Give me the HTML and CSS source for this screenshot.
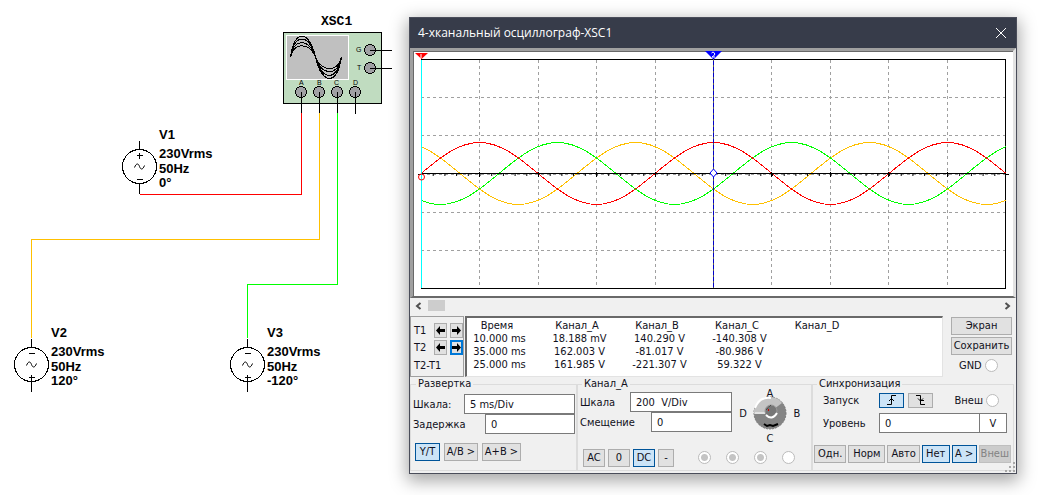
FILE: index.html
```html
<!DOCTYPE html>
<html lang="ru">
<head>
<meta charset="utf-8">
<title>4-хканальный осциллограф-XSC1</title>
<link rel="stylesheet" href="styles.css">
</head>
<body>
<main class="workspace">
  <svg class="schematic" viewBox="0 0 400 495" role="img" aria-label="Схема">
    <defs>
      <g id="source">
        <circle r="17" />
        <path d="M0-26V-17M0 17V27" />
        <path class="tilde" d="M-5 1C-3-4-1-3 0 0S3 4 5-1" />
      </g>
    </defs>
    <g class="wire">
      <path class="wire-red" d="M139.500 194.500H301.500V112" />
      <path class="wire-orange" d="M31.500 338V239.500H319.500V112" />
      <path class="wire-green" d="M247.500 338V284.500H337.500V112" />
    </g>
    <g class="device">
      <rect class="device-case" x="283.500" y="32.500" width="98" height="71" />
      <rect class="device-screen" x="286.500" y="35.500" width="62" height="44" />
      <path class="device-trace" d="M290.500 57C294 29 309 29 315.500 57S337 86 341.500 57M290.500 57C294 33 309 33 315.500 57S337 82 341.500 57M290.500 57C294 38 309 38 315.500 57S337 77 341.500 57M290.500 57C294 42 309 42 315.500 57S337 73 341.500 57" />
      <g class="pin">
        <circle cx="370" cy="50" r="5.500" /><circle cx="370" cy="68" r="5.500" />
        <circle cx="301" cy="92" r="5.500" /><circle cx="319" cy="92" r="5.500" />
        <circle cx="337" cy="92" r="5.500" /><circle cx="355" cy="92" r="5.500" />
      </g>
      <path class="lead" d="M370 50.500H392M370 68.500H392M301.500 92V113M319.500 92V113M337.500 92V113M355.500 92V114" />
      <g class="pin-name">
        <text x="356" y="52">G</text><text x="357" y="70">T</text>
        <text x="299" y="85">A</text><text x="317" y="85">B</text><text x="334" y="85">C</text><text x="353" y="85">D</text>
      </g>
      <text class="device-name" x="321" y="25">XSC1</text>
    </g>
    <g class="source" transform="translate(139.500 166.500)">
      <use href="#source" /><path d="M-3-11H3M0-14V-8M-3 13H3" />
    </g>
    <g class="source" transform="translate(31.500 364.500)">
      <use href="#source" /><path d="M-3-11H3M-3 13H3M0 10V16" />
    </g>
    <g class="source" transform="translate(247.500 364.500)">
      <use href="#source" /><path d="M-3-11H3M-3 13H3M0 10V16" />
    </g>
    <g class="source-text">
      <text x="159" y="139">V1</text><text x="159" y="158">230Vrms</text><text x="159" y="173">50Hz</text><text x="159" y="187">0°</text>
      <text x="51" y="337">V2</text><text x="51" y="356">230Vrms</text><text x="51" y="371">50Hz</text><text x="51" y="385">120°</text>
      <text x="267" y="337">V3</text><text x="267" y="356">230Vrms</text><text x="267" y="371">50Hz</text><text x="267" y="385">-120°</text>
    </g>
  </svg>

  <section class="window">
    <header class="titlebar">
      <h1 class="title">4-хканальный осциллограф-XSC1</h1>
      <button class="close" aria-label="Закрыть"><svg width="12" height="12" viewBox="0 0 12 12"><path d="M1 1L11 11M11 1L1 11" /></svg></button>
    </header>

    <div class="plot">
      <svg class="plot-svg" viewBox="413 51 600 245" role="img" aria-label="Осциллограмма">
        <defs>
          <clipPath id="area"><rect x="421" y="59" width="585" height="230" /></clipPath>
          <path id="wave" d="M0 173.500c19.100-16 37.300-31 58.500-31s39.400 15 58.500 31s37.300 31 58.500 31s39.400-15 58.500-31s37.300-31 58.500-31s39.400 15 58.500 31s37.300 31 58.500 31s39.400-15 58.500-31s37.300-31 58.500-31s39.400 15 58.500 31s37.300 31 58.500 31s39.400-15 58.500-31s37.300-31 58.500-31s39.400 15 58.500 31s37.300 31 58.500 31s39.400-15 58.500-31" />
          <pattern id="minor" x="421" y="173" width="11.700" height="4" patternUnits="userSpaceOnUse"><path d="M.500 0V3" /></pattern>
        </defs>
        <path class="grid" d="M479.500 60V288M538.500 60V288M596.500 60V288M655.500 60V288M771.500 60V288M830.500 60V288M888.500 60V288M947.500 60V288M421 97.500H1005M421 135.500H1005M421 174.500H1005M421 212.500H1005M421 250.500H1005" />
        <path class="frame" d="M421 59.500H1005.500V288.500H421" />
        <g class="waves" clip-path="url(#area)">
          <use class="wave-orange" href="#wave" x="343" />
          <use class="wave-green" href="#wave" x="265" />
          <use class="wave-red" href="#wave" x="421" />
        </g>
        <rect x="421" y="173" width="585" height="3" fill="url(#minor)" />
        <path class="frame" d="M418 174.500H421M421 173.500H1006M1005 174.500H1009M479.500 172V177M538.500 172V177M596.500 172V177M655.500 172V177M771.500 172V177M830.500 172V177M888.500 172V177M947.500 172V177" />
        <path class="cursor-cyan" d="M421.500 60V288" />
        <path class="cursor-one" d="M415 53H428L421.500 59Z" />
        <path class="cursor-mark" d="M421 54V58" />
        <circle class="ring" cx="421.500" cy="177" r="3" />
        <path class="cursor-line" d="M713.500 59V288" />
        <path class="cursor-dash" d="M713.500 59V288" />
        <path class="cursor-two" d="M705 51H722L713.500 59.500Z" />
        <path class="cursor-mark" d="M711.500 53Q713 51 714.500 53T712 57H715" />
        <path class="diamond" d="M713.500 169L717 173L713.500 177L710 173Z" />
      </svg>
    </div>

    <div class="scroll">
      <button class="scroll-arrow" aria-label="Влево"><svg width="7" height="8" viewBox="0 0 7 8"><path d="M5.500 1L2 4L5.500 7" /></svg></button>
      <div class="scroll-thumb"></div>
      <button class="scroll-arrow scroll-end" aria-label="Вправо"><svg width="7" height="8" viewBox="0 0 7 8"><path d="M1.500 1L5 4L1.500 7" /></svg></button>
    </div>

    <div class="readout">
      <div class="cursors">
        <span>T1</span>
        <button class="step" aria-label="T1 влево"><svg width="9" height="9" viewBox="0 0 9 9"><path d="M0 4.500L4 0V3H9V6H4V9Z" /></svg></button>
        <button class="step" aria-label="T1 вправо"><svg width="9" height="9" viewBox="0 0 9 9"><path d="M9 4.500L5 0V3H0V6H5V9Z" /></svg></button>
        <span>T2</span>
        <button class="step" aria-label="T2 влево"><svg width="9" height="9" viewBox="0 0 9 9"><path d="M0 4.500L4 0V3H9V6H4V9Z" /></svg></button>
        <button class="step step-focus" aria-label="T2 вправо"><svg width="9" height="9" viewBox="0 0 9 9"><path d="M9 4.500L5 0V3H0V6H5V9Z" /></svg></button>
        <span class="delta">T2-T1</span>
      </div>
      <div class="values">
        <table class="table">
          <thead><tr><th>Время</th><th>Канал_A</th><th>Канал_B</th><th>Канал_C</th><th>Канал_D</th></tr></thead>
          <tbody>
            <tr><td>10.000 ms</td><td>18.188 mV</td><td>140.290 V</td><td>-140.308 V</td><td></td></tr>
            <tr><td>35.000 ms</td><td>162.003 V</td><td>-81.017 V</td><td>-80.986 V</td><td></td></tr>
            <tr><td>25.000 ms</td><td>161.985 V</td><td>-221.307 V</td><td>59.322 V</td><td></td></tr>
          </tbody>
        </table>
      </div>
      <div class="actions">
        <button class="btn">Экран</button>
        <button class="btn">Сохранить</button>
        <label class="radio-label">GND <input class="radio" type="radio" name="gnd"></label>
      </div>
    </div>

    <div class="settings">
      <fieldset class="group sweep">
        <legend>Развертка</legend>
        <div class="row"><label for="scale">Шкала:</label><input class="field field-wide" id="scale" value="5 ms/Div"></div>
        <div class="row"><label for="delay">Задержка</label><input class="field field-narrow" id="delay" value="0"></div>
        <div class="buttons sweep-buttons"><button class="btn on">Y/T</button><button class="btn">A/B &gt;</button><button class="btn">A+B &gt;</button></div>
      </fieldset>

      <fieldset class="group channel">
        <legend>Канал_A</legend>
        <div class="channel-top">
          <div class="channel-fields">
            <div class="row"><label for="cscale">Шкала</label><input class="field" id="cscale" value="200  V/Div"></div>
            <div class="row"><label for="offset">Смещение</label><input class="field field-offset" id="offset" value="0"></div>
          </div>
          <div class="dial">
            <span class="dial-a">A</span><span class="dial-d">D</span>
            <svg class="knob" width="34" height="34" viewBox="0 0 34 34">
              <circle cx="17" cy="17" r="16" fill="#848484" stroke="#777" stroke-dasharray="2 1" />
              <path d="M1 18C0 8 8 1 17 1C23 1 27 4 29 7L21 13C17 9 13 13 12 18Z" fill="#c4c4c4" />
              <path d="M2 12C5 4 11 1 18 2" fill="none" stroke="#fff" stroke-width="2" />
              <path d="M2 17H12" stroke="#fff" />
              <circle cx="18" cy="15" r="6" fill="#777" stroke="#999" />
              <path d="M13 19Q19 25 24 17" fill="none" stroke="#fff" stroke-width="2" />
              <path d="M11 28L14 30L17 29L20 30L25 28" fill="none" stroke="#000" stroke-width="2" />
              <path d="M13 14L18 9" stroke="#333" stroke-dasharray="1 1" /><rect x="15" y="13" width="1" height="2" fill="#c00" />
            </svg>
            <span class="dial-b">B</span><span class="dial-c">C</span>
          </div>
        </div>
        <div class="buttons channel-buttons">
          <button class="btn">AC</button><button class="btn">0</button><button class="btn on">DC</button><button class="btn">-</button>
          <div class="radios">
            <input class="radio dot" type="radio" name="a" aria-label="A" disabled><input class="radio dot" type="radio" name="b" aria-label="B" disabled><input class="radio dot" type="radio" name="c" aria-label="C" disabled><input class="radio" type="radio" name="d" aria-label="D">
          </div>
        </div>
      </fieldset>

      <fieldset class="group sync">
        <legend>Синхронизация</legend>
        <div class="sync-row">
          <span class="sync-label">Запуск</span>
          <button class="btn edge on" aria-label="Фронт"><svg width="12" height="10" viewBox="0 0 12 10"><path d="M1 9.500H5.500V.500H10M3 6L5.500 3.500L8 6" /></svg></button>
          <button class="btn edge" aria-label="Спад"><svg width="12" height="10" viewBox="0 0 12 10"><path d="M1 .500H5.500V9.500H10M3 3.500L5.500 6L8 3.500M5 5.500H9" /></svg></button>
          <label class="radio-label ext">Внеш <input class="radio" type="radio" name="ext"></label>
        </div>
        <div class="sync-row level">
          <label class="sync-label" for="level">Уровень</label><input class="field level-field" id="level" value="0"><input class="field unit" aria-label="Единица" value="V">
        </div>
        <div class="buttons sync-buttons"><button class="btn">Одн.</button><button class="btn">Норм</button><button class="btn">Авто</button><button class="btn on">Нет</button><button class="btn on">A &gt;</button><button class="btn" disabled>Внеш</button></div>
      </fieldset>
      <svg class="grip" width="10" height="10" viewBox="0 0 10 10"><path d="M8 0H10V2H8ZM4 4H6V6H4ZM8 4H10V6H8ZM0 8H2V10H0ZM4 8H6V10H4ZM8 8H10V10H8Z" /></svg>
    </div>
  </section>
</main>
</body>
</html>
```
FILE: styles.css
```css
* { box-sizing: border-box; }
body { margin: 0; background: #fff; color: #101020; font: 11px/13px "DejaVu Sans Condensed", "DejaVu Sans", sans-serif; overflow-x: hidden; }
button, input { font: inherit; color: inherit; margin: 0; border-radius: 0; }
svg { display: block; }

.workspace { display: flex; align-items: flex-start; gap: 9px; padding-right: 23px; }
.schematic { flex: none; width: 400px; }
.schematic path, .schematic circle, .schematic rect { shape-rendering: crispEdges; }
.wire path { fill: none; }
.wire-red { stroke: #f00; }
.wire-orange { stroke: #ffc000; }
.wire-green { stroke: #0f0; }
.device-case { fill: #c0dcc0; stroke: #000; }
.device-screen { fill: #c0c0c0; stroke: #fff; }
.schematic .device-trace { fill: none; stroke: #000; }
.schematic .tilde { shape-rendering: auto; }
.pin circle { fill: #a0a0a4; stroke: #000; }
.lead { stroke: #000; }
.pin-name { font: 7px "Liberation Sans", sans-serif; }
.device-name { font: bold 13px "Liberation Mono", monospace; }
.source { fill: none; stroke: #000; }
.source-text { font: bold 13px "Liberation Sans", sans-serif; }

.window { flex: 1; margin-top: 17px; min-width: 606px; background: #f0f0f0; border: 1px solid #4a4d5a; box-shadow: 0 5px 16px 2px rgba(0, 0, 0, .35); }
.titlebar { display: flex; align-items: center; justify-content: space-between; height: 30px; padding: 0 9px 0 8px; background: #373c4a; color: #fff; }
.title { margin: 0; font: 12px/16px "Open Sans", "Noto Sans", sans-serif; }
.close { padding: 0; border: 0; background: none; }
.close path { stroke: #fff; fill: none; }

.plot { background: #fff; border: 3px solid #a0a0a0; border-right-color: #e3e3e3; border-bottom: 2px solid #696969; box-shadow: inset 1px 1px #696969; }
.plot-svg { width: 100%; }
.grid, .frame, .cursor-cyan, .cursor-line, .cursor-dash, .waves { fill: none; shape-rendering: crispEdges; }
.grid { stroke: #a0a0a0; stroke-dasharray: 3 3; }
.frame, #minor path { stroke: #000; }
.wave-orange { stroke: #ffc000; }
.wave-green { stroke: #0f0; }
.wave-red { stroke: #f00; }
.cursor-cyan { stroke: #0ff; }
.cursor-one { fill: #f00; }
.cursor-two { fill: #00f; }
.cursor-mark { stroke: #fff; fill: none; }
.ring { stroke: #f00; fill: none; }
.cursor-line { stroke: #00c; }
.cursor-dash { stroke: #555; stroke-dasharray: 2 4; }
.diamond { stroke: #00f; fill: #fff; }

.scroll { display: flex; height: 18px; padding: 2px 5px; }
.scroll-arrow { display: flex; padding: 2px 0 0; width: 7px; border: 0; background: none; }
.scroll-arrow path { fill: none; stroke: #505050; stroke-width: 2; }
.scroll-thumb { width: 17px; height: 11px; margin-left: 6px; background: #cdcdcd; }
.scroll-end { margin-left: auto; }

.readout { display: flex; gap: 1px; height: 61px; padding-right: 4px; }
.cursors { display: grid; grid-template-columns: 17px 13px 13px; grid-template-rows: 17px 17px 18px; column-gap: 3px; width: 54px; padding: 5px 0 0 3px; align-items: center; border: 1px solid #a0a0a0; }
.step { display: flex; align-items: center; justify-content: center; width: 13px; height: 15px; padding: 0; border: 1px solid #adadad; background: #e1e1e1; }
.step-focus { border: 2px solid #0078d7; }
.delta { grid-column: 1 / -1; }
.values { flex: 1; padding-top: 1px; border: 1px solid #e3e3e3; border-top: 2px solid #696969; border-left: 2px solid #696969; background: #fff; overflow: hidden; }
.table { border-collapse: collapse; table-layout: fixed; width: 400px; margin-left: -10px; }
.table th, .table td { width: 80px; height: 13px; padding: 0; font-weight: normal; text-align: center; white-space: pre; }
.table td { padding-left: 5px; }
.actions { display: flex; flex-direction: column; gap: 2px; width: 61px; margin-left: 7px; padding-top: 1px; }
.btn { height: 18px; padding: 0; border: 1px solid #adadad; background: #e1e1e1; line-height: 14px; white-space: nowrap; }
.btn.on { border-color: #005499; background: #cce4f7; }
.btn:disabled { border-color: #bfbfbf; background: #ccc; color: #838383; }
.radio-label { display: flex; align-items: center; gap: 3px; }
.actions .radio-label { padding: 2px 0 0 8px; }
.radio { appearance: none; flex: none; width: 13px; height: 13px; border: 1px solid #bbb; border-radius: 50%; background: #fff; }
.radio.dot { background: radial-gradient(circle, #c4c4c4 0 3px, #fff 4px); }

.settings { position: relative; display: grid; grid-template-columns: 167fr 235fr 202fr; padding-right: 2px; }
.group { min-width: 0; height: 94px; margin: 0 0 2px; padding: 0; border: 1px solid #dcdcdc; }
.group legend { margin-left: 5px; padding: 0 2px; line-height: 14px; }
.channel legend, .sync legend { margin-left: 4px; }
.row { display: flex; align-items: center; justify-content: space-between; padding-left: 2px; }
.field { min-width: 0; height: 20px; padding: 0 5px; border: 1px solid #7a7a7a; background: #fff; white-space: pre; }
.sweep { padding: 3px 1px 0 0; }
.field-wide { width: 111px; }
.field-narrow { width: 90px; }
.buttons { display: flex; }
.sweep-buttons { gap: 4px; margin: 9px 0 0 4px; }
.sweep-buttons .btn { width: 25px; }
.sweep-buttons .btn + .btn { width: 34px; }
.sweep-buttons .btn + .btn + .btn { width: 39px; }
.channel-top { display: flex; justify-content: space-between; padding-right: 10px; }
.channel-fields { flex: none; width: 154px; padding-top: 1px; }
.channel-fields .field { width: 102px; }
.channel-fields .field-offset { width: 81px; }
.dial { display: grid; grid-template-columns: 8px 34px 8px; grid-template-rows: 8px 32px 16px; column-gap: 6px; align-items: center; justify-items: center; margin-top: -2px; }
.dial-a { grid-area: 1 / 2; }
.dial-d { grid-area: 2 / 1; }
.knob { grid-area: 2 / 2; }
.dial-b { grid-area: 2 / 3; }
.dial-c { grid-area: 3 / 2; align-self: end; }
.channel-buttons { gap: 3px; margin: 4px 0 0 5px; }
.channel-buttons .btn { width: 22px; }
.channel-buttons .btn:nth-child(4) { width: 16px; }
.radios { display: flex; gap: 15px; margin: 2px 0 0 21px; }
.sync-row { display: flex; align-items: center; height: 18px; padding-left: 10px; }
.sync-label { width: 56px; }
.edge { display: flex; align-items: center; justify-content: center; width: 25px; height: 15px; margin-right: 4px; }
.edge svg { fill: none; stroke: #000; }
.ext { margin: 0 14px 0 auto; }
.level { margin-top: 5px; padding-right: 6px; }
.level-field { flex: 1; }
.unit { width: 28px; text-align: center; margin-left: -1px; }
.sync-buttons { gap: 2px; margin: 13px 2px 0 1px; }
.sync-buttons .btn { flex: 33; }
.sync-buttons .btn:nth-child(2) { flex: 38; }
.sync-buttons .btn:nth-child(4) { flex: 28; }
.sync-buttons .btn:nth-child(5) { flex: 25; }
.grip { position: absolute; right: 1px; bottom: 1px; fill: #a8a8a8; }
```
